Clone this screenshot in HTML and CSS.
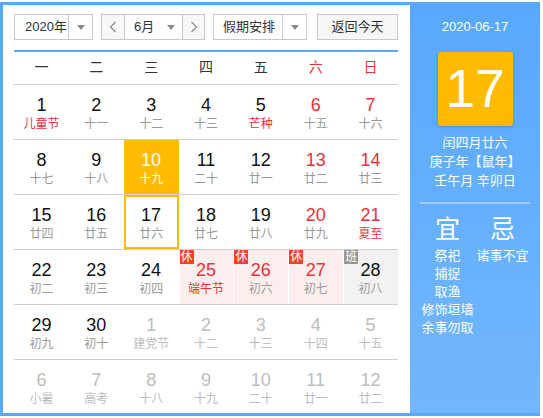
FILE: index.html
```html
<!DOCTYPE html>
<html>
<head>
<meta charset="utf-8">
<link rel="stylesheet" href="styles.css">
</head>
<body>
<div class="cal">
  <div class="main">
    <div class="bar">
      <div class="sel year"><span class="val">2020年</span><span class="drop"><i class="tri"></i></span></div>
      <div class="month">
        <span class="nav prev"><svg width="8" height="12" viewBox="0 0 8 12"><polyline points="6.5,1 1.5,6 6.5,11" fill="none" stroke="#8a8a8a" stroke-width="1.2"/></svg></span>
        <span class="mval"><span>6月</span><i class="tri"></i></span>
        <span class="nav next"><svg width="8" height="12" viewBox="0 0 8 12"><polyline points="1.5,1 6.5,6 1.5,11" fill="none" stroke="#8a8a8a" stroke-width="1.2"/></svg></span>
      </div>
      <div class="sel hol-sel"><span class="val">假期安排</span><span class="drop"><i class="tri"></i></span></div>
      <div class="back">返回今天</div>
    </div>
    <div class="week">
      <span>一</span><span>二</span><span>三</span><span>四</span><span>五</span><span class="red">六</span><span class="red">日</span>
    </div>
    <div class="days">
      <div class="d"><b>1</b><small class="fest">儿童节</small></div>
      <div class="d"><b>2</b><small>十一</small></div>
      <div class="d"><b>3</b><small>十二</small></div>
      <div class="d"><b>4</b><small>十三</small></div>
      <div class="d"><b>5</b><small class="fest">芒种</small></div>
      <div class="d we"><b>6</b><small>十五</small></div>
      <div class="d we"><b>7</b><small>十六</small></div>

      <div class="d"><b>8</b><small>十七</small></div>
      <div class="d"><b>9</b><small>十八</small></div>
      <div class="d today"><b>10</b><small>十九</small></div>
      <div class="d"><b>11</b><small>二十</small></div>
      <div class="d"><b>12</b><small>廿一</small></div>
      <div class="d we"><b>13</b><small>廿二</small></div>
      <div class="d we"><b>14</b><small>廿三</small></div>

      <div class="d"><b>15</b><small>廿四</small></div>
      <div class="d"><b>16</b><small>廿五</small></div>
      <div class="d picked"><b>17</b><small>廿六</small></div>
      <div class="d"><b>18</b><small>廿七</small></div>
      <div class="d"><b>19</b><small>廿八</small></div>
      <div class="d we"><b>20</b><small>廿九</small></div>
      <div class="d we"><b>21</b><small class="fest">夏至</small></div>

      <div class="d"><b>22</b><small>初二</small></div>
      <div class="d"><b>23</b><small>初三</small></div>
      <div class="d"><b>24</b><small>初四</small></div>
      <div class="d we off"><i class="bdg rest">休</i><b>25</b><small class="fest">端午节</small></div>
      <div class="d we off"><i class="bdg rest">休</i><b>26</b><small>初六</small></div>
      <div class="d we off"><i class="bdg rest">休</i><b>27</b><small>初七</small></div>
      <div class="d work"><i class="bdg duty">班</i><b>28</b><small>初八</small></div>

      <div class="d"><b>29</b><small>初九</small></div>
      <div class="d"><b>30</b><small>初十</small></div>
      <div class="d other"><b>1</b><small>建党节</small></div>
      <div class="d other"><b>2</b><small>十二</small></div>
      <div class="d other"><b>3</b><small>十三</small></div>
      <div class="d other"><b>4</b><small>十四</small></div>
      <div class="d other"><b>5</b><small>十五</small></div>

      <div class="d other last"><b>6</b><small>小暑</small></div>
      <div class="d other last"><b>7</b><small>高考</small></div>
      <div class="d other last"><b>8</b><small>十八</small></div>
      <div class="d other last"><b>9</b><small>十九</small></div>
      <div class="d other last"><b>10</b><small>二十</small></div>
      <div class="d other last"><b>11</b><small>廿一</small></div>
      <div class="d other last"><b>12</b><small>廿二</small></div>
    </div>
  </div>
  <div class="side">
    <div class="date">2020-06-17</div>
    <div class="big">17</div>
    <div class="lunar">
      <div>闰四月廿六</div>
      <div>庚子年【鼠年】</div>
      <div>壬午月 辛卯日</div>
    </div>
    <div class="rule"></div>
    <div class="yj">
      <div class="col">
        <div class="hd">宜</div>
        <div class="it">祭祀</div>
        <div class="it">捕捉</div>
        <div class="it">取渔</div>
        <div class="it">修饰垣墙</div>
        <div class="it">余事勿取</div>
      </div>
      <div class="col">
        <div class="hd">忌</div>
        <div class="it">诸事不宜</div>
      </div>
    </div>
  </div>
</div>
</body>
</html>
```

FILE: styles.css
```css
* { box-sizing: border-box; }
html, body { margin: 0; padding: 0; background: #fff; }
body {
  font-family: "Liberation Sans", "Noto Sans CJK SC", sans-serif;
  color: #333;
}
.cal {
  margin-top: 2px;
  width: 540px;
  height: 414px;
  border: 3px solid #5aa9f9;
  border-right: 0;
  display: flex;
  overflow: hidden;
  background: #fff;
}
.main {
  width: 407px;
  padding: 9px 12px 0 11px;
}
.bar {
  display: flex;
  height: 26px;
  font-size: 13px;
  line-height: 24px;
}
.sel, .month, .back {
  border: 1px solid #c8c8c8;
  height: 26px;
  display: flex;
}
.year { width: 79px; }
.hol-sel { width: 94px; margin-left: 8px; }
.sel .val {
  flex: 1;
  padding-left: 10px;
  color: #333;
}
.hol-sel .val { padding-left: 9px; }
.sel .drop {
  width: 24px;
  border-left: 1px solid #c8c8c8;
  display: flex;
  align-items: center;
  justify-content: center;
}
.tri {
  display: block;
  width: 0;
  height: 0;
  border-left: 4px solid transparent;
  border-right: 4px solid transparent;
  border-top: 5px solid #8a8a8a;
}
.month { width: 104px; margin-left: 8px; }
.nav {
  width: 23px;
  background: #f7f7f7;
  display: flex;
  align-items: center;
  justify-content: center;
}
.prev { border-right: 1px solid #c8c8c8; }
.next { width: 22px; border-left: 1px solid #c8c8c8; }
.mval {
  flex: 1;
  display: flex;
  align-items: center;
  justify-content: space-between;
  padding: 0 7px 0 9px;
}
.back {
  width: 81px;
  margin-left: 10px;
  background: #f7f7f7;
  justify-content: center;
  color: #333;
}
.week {
  margin-top: 10px;
  border-top: 2px solid #5aa9f9;
  border-bottom: 1px solid #cfcfcf;
  height: 35px;
  display: grid;
  grid-template-columns: repeat(7, 1fr);
  font-size: 14px;
  line-height: 31px;
  text-align: center;
  color: #333;
}
.week .red { color: #e8323a; }
.days {
  display: grid;
  grid-template-columns: repeat(7, 1fr);
}
.d {
  position: relative;
  height: 55px;
  border-bottom: 1px solid #cfcfcf;
  text-align: center;
  padding-top: 10px;
}
.d.last { border-bottom: 0; }
.d b {
  display: block;
  font-weight: normal;
  font-size: 18px;
  line-height: 20px;
  color: #111;
  font-family: "Liberation Sans", sans-serif;
}
.d small {
  display: block;
  font-size: 12px;
  line-height: 18px;
  color: #9a9a9a;
}
.d.we b { color: #e8323a; }
.d small.fest { color: #e8323a; }
.d.other b, .d.other small { color: #bdbdbd; }
.d.today { background: #ffbb00; }
.d.today b, .d.today small { color: #fff; }
.d.picked { box-shadow: inset 0 0 0 2px #ffbb00; }
.d.off { background: #fdeeee; box-shadow: inset 1px 0 0 #fff; }
.d.work { background: #f2f2f2; box-shadow: inset 1px 0 0 #fff; }
.bdg {
  position: absolute;
  left: 1px;
  top: 0;
  width: 14px;
  height: 14px;
  font-style: normal;
  font-size: 12px;
  line-height: 14px;
  color: #fff;
  text-align: center;
}
.bdg.rest { background: #f2412e; }
.bdg.duty { background: #969696; }
.side {
  width: 130px;
  background: linear-gradient(#58a8fd, #72b7fd);
  color: #fff;
  text-align: center;
  padding-top: 12px;
}
.date {
  font-size: 13px;
  line-height: 20px;
}
.big {
  width: 75px;
  height: 74px;
  margin: 15px auto 0;
  background: #ffbb00;
  border-radius: 3px;
  box-shadow: 0 1px 3px rgba(0,0,0,0.2);
  font-size: 53px;
  line-height: 74px;
  color: #fff;
  font-family: "Liberation Sans", sans-serif;
}
.lunar {
  margin-top: 7px;
  font-size: 13px;
  line-height: 19px;
}
.rule {
  margin: 12px 10px 0;
  height: 2px;
  background: rgba(255,255,255,0.4);
}
.yj {
  display: flex;
  padding: 0 10px;
  margin-top: 10px;
}
.yj .col { width: 55px; }
.yj .hd {
  font-size: 25px;
  line-height: 30px;
  margin-bottom: 3px;
}
.yj .it {
  font-size: 13px;
  line-height: 18px;
  white-space: nowrap;
}
```
